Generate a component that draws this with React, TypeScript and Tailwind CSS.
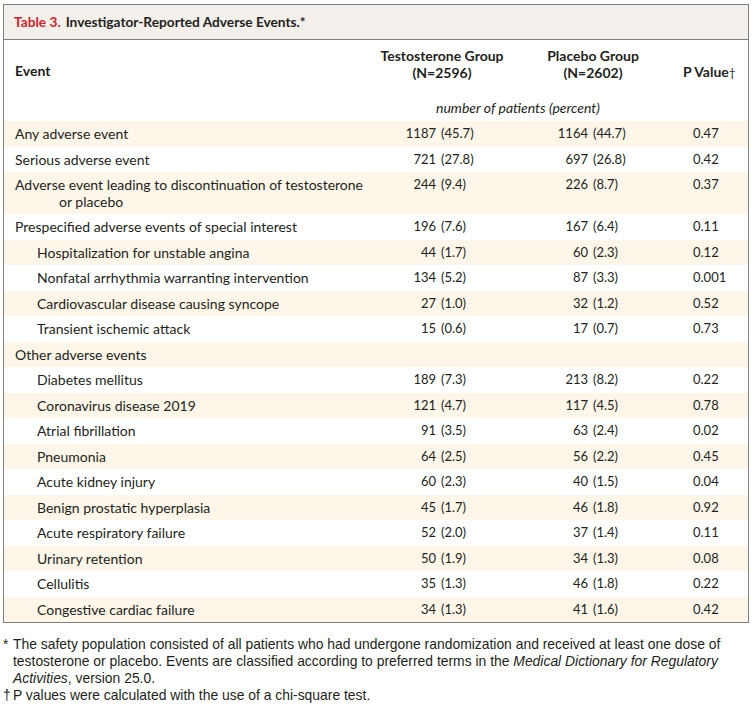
import React from "react";

type Row = {
  label: string;
  label2?: string;
  indent?: boolean;
  t?: [string, string];
  p?: [string, string];
  pv?: string;
};

const rows: Row[] = [
  { label: "Any adverse event", t: ["1187", "(45.7)"], p: ["1164", "(44.7)"], pv: "0.47" },
  { label: "Serious adverse event", t: ["721", "(27.8)"], p: ["697", "(26.8)"], pv: "0.42" },
  {
    label: "Adverse event leading to discontinuation of testosterone",
    label2: "or placebo",
    t: ["244", "(9.4)"],
    p: ["226", "(8.7)"],
    pv: "0.37",
  },
  { label: "Prespecified adverse events of special interest", t: ["196", "(7.6)"], p: ["167", "(6.4)"], pv: "0.11" },
  { label: "Hospitalization for unstable angina", indent: true, t: ["44", "(1.7)"], p: ["60", "(2.3)"], pv: "0.12" },
  { label: "Nonfatal arrhythmia warranting intervention", indent: true, t: ["134", "(5.2)"], p: ["87", "(3.3)"], pv: "0.001" },
  { label: "Cardiovascular disease causing syncope", indent: true, t: ["27", "(1.0)"], p: ["32", "(1.2)"], pv: "0.52" },
  { label: "Transient ischemic attack", indent: true, t: ["15", "(0.6)"], p: ["17", "(0.7)"], pv: "0.73" },
  { label: "Other adverse events" },
  { label: "Diabetes mellitus", indent: true, t: ["189", "(7.3)"], p: ["213", "(8.2)"], pv: "0.22" },
  { label: "Coronavirus disease 2019", indent: true, t: ["121", "(4.7)"], p: ["117", "(4.5)"], pv: "0.78" },
  { label: "Atrial fibrillation", indent: true, t: ["91", "(3.5)"], p: ["63", "(2.4)"], pv: "0.02" },
  { label: "Pneumonia", indent: true, t: ["64", "(2.5)"], p: ["56", "(2.2)"], pv: "0.45" },
  { label: "Acute kidney injury", indent: true, t: ["60", "(2.3)"], p: ["40", "(1.5)"], pv: "0.04" },
  { label: "Benign prostatic hyperplasia", indent: true, t: ["45", "(1.7)"], p: ["46", "(1.8)"], pv: "0.92" },
  { label: "Acute respiratory failure", indent: true, t: ["52", "(2.0)"], p: ["37", "(1.4)"], pv: "0.11" },
  { label: "Urinary retention", indent: true, t: ["50", "(1.9)"], p: ["34", "(1.3)"], pv: "0.08" },
  { label: "Cellulitis", indent: true, t: ["35", "(1.3)"], p: ["46", "(1.8)"], pv: "0.22" },
  { label: "Congestive cardiac failure", indent: true, t: ["34", "(1.3)"], p: ["41", "(1.6)"], pv: "0.42" },
];

export default function App() {
  return (
    <div className="w-[752px] h-[713px] bg-white text-[#231f20] font-['Lato','Noto_Sans',sans-serif] pt-[4px] pl-[3px]">
      <div className="w-[746px] border border-[#7f7f7f]">
        <div className="h-[35px] bg-[#f3f0eb] border-b border-[#7f7f7f] flex items-center pl-[10px] text-[13.7px] font-bold">
          <span className="text-[#d2232e]">Table 3.</span>
          <span className="ml-[5px]">Investigator-Reported Adverse Events.*</span>
        </div>
        <div className="pt-[7px] pb-[5px] text-[14px] font-bold leading-[17px]">
          <div className="flex items-end">
            <div className="w-[363px] pl-[11px] pb-[2px]">Event</div>
            <div className="w-[150px] text-center">
              Testosterone Group
              <br />
              (N=2596)
            </div>
            <div className="w-[152px] text-center">
              Placebo Group
              <br />
              (N=2602)
            </div>
            <div className="flex-1 pl-[14px]">
              P Value<span className="font-normal text-[12px]">†</span>
            </div>
          </div>
          <div className="flex mt-[18px]">
            <div className="w-[363px]"></div>
            <div className="w-[302px] text-center italic font-normal text-[14px]">number of patients (percent)</div>
          </div>
        </div>
        <div className="text-[14px] leading-[17px]">
          {rows.map((r, i) => (
            <div
              key={i}
              className={`flex pt-[4px] ${r.label2 ? "h-[42px]" : "h-[25.5px]"} ${i % 2 === 0 ? "bg-[#fdf6e9]" : "bg-white"}`}
            >
              <div className={`w-[363px] ${r.indent ? "pl-[33px]" : "pl-[11px]"}`}>
                <div>{r.label}</div>
                {r.label2 && <div className="pl-[44px]">{r.label2}</div>}
              </div>
              <div className="w-[150px] flex text-[13px]">
                {r.t && (
                  <>
                    <span className="w-[69px] text-right">{r.t[0]}</span>
                    <span className="ml-[5px]">{r.t[1]}</span>
                  </>
                )}
              </div>
              <div className="w-[152px] flex text-[13px]">
                {r.p && (
                  <>
                    <span className="w-[71px] text-right">{r.p[0]}</span>
                    <span className="ml-[5px]">{r.p[1]}</span>
                  </>
                )}
              </div>
              <div className="flex-1 pl-[24px] text-[13px]">{r.pv}</div>
            </div>
          ))}
        </div>
      </div>
      <div className="mt-[13px] text-[13.9px] leading-[17px] font-['Liberation_Sans',sans-serif] whitespace-nowrap">
        <div className="flex">
          <span className="w-[10px] shrink-0">*</span>
          <div className="flex flex-col">
            <span>The safety population consisted of all patients who had undergone randomization and received at least one dose of</span>
            <span>
              testosterone or placebo. Events are classified according to preferred terms in the{" "}
              <i>Medical Dictionary for Regulatory</i>
            </span>
            <span>
              <i>Activities</i>, version 25.0.
            </span>
          </div>
        </div>
        <div className="flex">
          <span className="w-[10px] shrink-0">†</span>
          <span>P values were calculated with the use of a chi-square test.</span>
        </div>
      </div>
    </div>
  );
}
